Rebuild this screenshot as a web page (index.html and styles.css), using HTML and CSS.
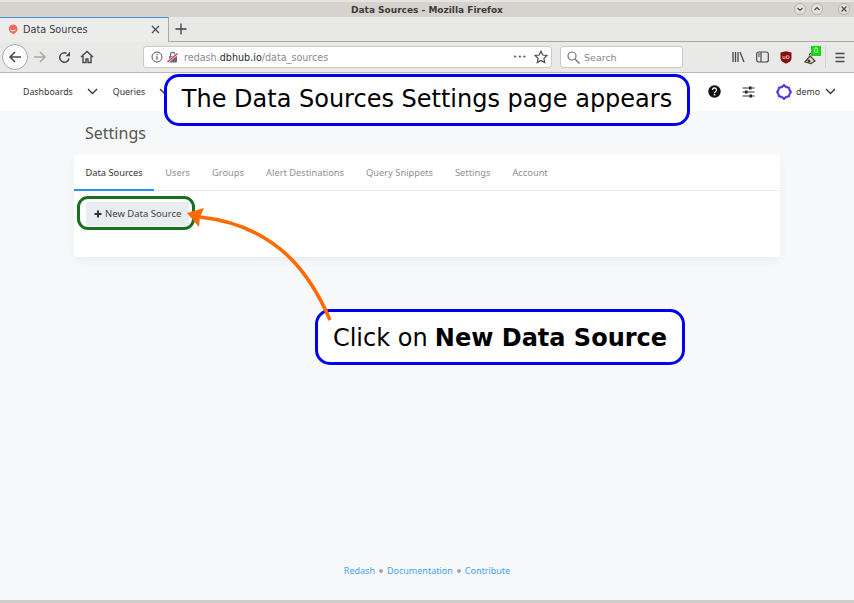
FILE: index.html
```html
<!DOCTYPE html>
<html lang="en">
<head>
    <meta charset="UTF-8">
    <title>Data Sources - Mozilla Firefox</title>
    <link rel="stylesheet" href="styles.css">
</head>
<body>
    <div class="window">
        <div class="titlebar">
            <span class="title-text">Data Sources - Mozilla Firefox</span>
            <div class="win-buttons">
                <span class="win-btn"><svg width="8" height="8" viewBox="0 0 8 8"><path d="M1.500 3l2.500 2.500L6.500 3" class="win-glyph"/></svg></span>
                <span class="win-btn"><svg width="8" height="8" viewBox="0 0 8 8"><path d="M1.500 5L4 2.500 6.500 5" class="win-glyph"/></svg></span>
                <span class="win-btn win-close"><svg width="8" height="8" viewBox="0 0 8 8"><path d="M1.500 1.500l5 5M6.500 1.500l-5 5" class="win-glyph"/></svg></span>
            </div>
        </div>

        <div class="tabstrip">
            <div class="tab">
                <svg class="favicon" width="10" height="11" viewBox="0 0 10 11"><path d="M5 0.500a4.500 4.500 0 0 1 2.200 8.400L5 10.500 4.600 9.400A4.500 4.500 0 0 1 5 0.500z" fill="#f0685f"/><path d="M2.500 6c1.500 1 3.500 1 5 0" fill="none" stroke="#fff" stroke-width="1"/></svg>
                <span class="tab-label">Data Sources</span>
                <svg class="tab-close" width="9" height="9" viewBox="0 0 9 9"><path d="M1 1l7 7M8 1l-7 7" stroke="#4a4a4f" stroke-width="1.200"/></svg>
            </div>
            <svg class="new-tab" width="12" height="12" viewBox="0 0 12 12"><path d="M6 0.500v11M0.500 6h11" stroke="#3c3c40" stroke-width="1.300"/></svg>
        </div>

        <div class="toolbar">
            <span class="back-btn">
                <svg width="14" height="14" viewBox="0 0 14 14"><path d="M13 7H2M7 2L2 7l5 5" fill="none" stroke="#47474c" stroke-width="1.500"/></svg>
            </span>
            <svg class="tool-icon forward" width="14" height="14" viewBox="0 0 14 14"><path d="M1 7h11M7 2l5 5-5 5" fill="none" stroke="#a9a9ab" stroke-width="1.500"/></svg>
            <svg class="tool-icon reload" width="13" height="13" viewBox="0 0 13 13"><path d="M11 7.500A4.700 4.700 0 1 1 8.500 2.300" fill="none" stroke="#47474c" stroke-width="1.500"/><path d="M12 0.800v4.400H7.600z" fill="#47474c"/></svg>
            <svg class="tool-icon home" width="14" height="14" viewBox="0 0 14 14"><path d="M1 7l6-5.500L13 7M3 6v6.500h3V9h2v3.500h3V6" fill="none" stroke="#47474c" stroke-width="1.400"/></svg>

            <div class="urlbar">
                <svg width="12" height="12" viewBox="0 0 12 12"><circle cx="6" cy="6" r="5" fill="none" stroke="#57575b" stroke-width="1"/><path d="M6 5.200v3.500M6 3v1.200" stroke="#57575b" stroke-width="1.200"/></svg>
                <svg class="lock" width="11" height="12" viewBox="0 0 11 12"><rect x="2" y="5" width="8" height="6.500" rx="1" fill="#6a6a6e"/><path d="M3.500 5V3.500a2.200 2.200 0 0 1 4.400 0V5" fill="none" stroke="#6a6a6e" stroke-width="1.200"/><path d="M0.500 11L10.500 2.500" stroke="#fff" stroke-width="2.600"/><path d="M0.500 11L10.500 2.500" stroke="#e8294c" stroke-width="1.400"/></svg>
                <span class="url"><span class="url-dim">redash.</span>dbhub.io<span class="url-dim">/data_sources</span></span>
                <span class="url-dots">•••</span>
                <svg width="14" height="14" viewBox="0 0 14 14"><path d="M7 1.200l1.800 3.800 4.100.500-3 2.900.8 4.100L7 10.500l-3.700 2 .8-4.100-3-2.900 4.100-.500z" fill="none" stroke="#47474c" stroke-width="1.200"/></svg>
            </div>

            <div class="searchbar">
                <svg width="13" height="13" viewBox="0 0 13 13"><circle cx="5" cy="5" r="4" fill="none" stroke="#77777a" stroke-width="1.200"/><path d="M8 8l4.500 4.500" stroke="#77777a" stroke-width="1.400"/></svg>
                <span class="search-text">Search</span>
            </div>

            <div class="tool-right">
                <svg width="13" height="12" viewBox="0 0 13 12"><path d="M1 1v10M3.500 1v10M6 1v10M8 1l4 10" fill="none" stroke="#47474c" stroke-width="1.300"/></svg>
                <svg width="13" height="12" viewBox="0 0 13 12"><rect x="0.700" y="1" width="11.600" height="10" rx="2" fill="none" stroke="#47474c" stroke-width="1.200"/><path d="M5 1v10" stroke="#47474c" stroke-width="1.200"/><path d="M2 3h2M2 5h2" stroke="#47474c"/></svg>
                <svg width="12" height="13" viewBox="0 0 12 13"><path d="M0.500 1.500L6 0.300l5.500 1.200v5.500c0 3-3 4.800-5.500 5.700C3.500 11.800.5 10 .5 7z" fill="#8a1010"/><path d="M3 5v2.500h2V5M6.500 4.800v2.700h1.500a1.300 1.300 0 0 0 0-2.700z" fill="none" stroke="#e9c3c3" stroke-width="0.800"/></svg>
                <span class="addon">
                    <svg width="15" height="13" viewBox="0 0 15 13"><path d="M1 10l5-6 5 5-4 2.500z" fill="#e9dcc0" stroke="#4a4038" stroke-width="1.200"/><circle cx="5" cy="9" r="1.500" fill="#3a3330"/><path d="M5 3l2-2" stroke="#4a4038" stroke-width="1.200"/></svg>
                    <span class="addon-badge">0</span>
                </span>
                <span class="tool-sep"></span>
                <svg width="10" height="11" viewBox="0 0 10 11"><path d="M0.500 1.500h9M0.500 5.500h9M0.500 9.500h9" stroke="#47474c" stroke-width="1.400"/></svg>
            </div>
        </div>

        <div class="page">
            <nav class="app-nav">
                <span class="nav-link">Dashboards</span>
                <svg class="chev chev-dash" width="11" height="7" viewBox="0 0 11 7"><path d="M1 1l4.500 4.500L10 1" fill="none" stroke="#333" stroke-width="1.300"/></svg>
                <span class="nav-link">Queries</span>
                <svg class="chev" width="11" height="7" viewBox="0 0 11 7"><path d="M1 1l4.500 4.500L10 1" fill="none" stroke="#333" stroke-width="1.300"/></svg>
                <div class="nav-right">
                    <svg width="13" height="13" viewBox="0 0 13 13"><circle cx="6.500" cy="6.500" r="6.200" fill="#111"/><path d="M4.500 5a2 2 0 1 1 3 1.700c-.7.400-1 .8-1 1.500" fill="none" stroke="#fff" stroke-width="1.300"/><rect x="5.800" y="9" width="1.500" height="1.500" fill="#fff"/></svg>
                    <svg class="sliders" width="13" height="12" viewBox="0 0 13 12"><path d="M0.500 2h12M0.500 6h12M0.500 10h12" stroke="#333" stroke-width="1.100"/><rect x="7" y="0.500" width="2.500" height="3" fill="#222"/><rect x="3" y="4.500" width="2.500" height="3" fill="#222"/><rect x="7.500" y="8.500" width="2.500" height="3" fill="#222"/></svg>
                    <svg class="avatar" width="16" height="16" viewBox="0 0 16 16"><path d="M8 1.200c1.500 1.800 2.300 2.400 5 2.600.3 2.200.500 2.800 1.800 4.200-1.300 1.400-1.500 2-1.800 4.200-2.700.2-3.500.8-5 2.600-1.500-1.800-2.300-2.400-5-2.600C2.700 10 2.500 9.400 1.200 8 2.500 6.600 2.700 6 3 3.800c2.700-.2 3.500-.8 5-2.600z" fill="none" stroke="#5a35e0" stroke-width="2.200"/></svg>
                    <span class="nav-link demo">demo</span>
                    <svg class="chev" width="11" height="7" viewBox="0 0 11 7"><path d="M1 1l4.500 4.500L10 1" fill="none" stroke="#333" stroke-width="1.300"/></svg>
                </div>
            </nav>

            <main class="content">
                <h1 class="page-title">Settings</h1>
                <section class="card">
                    <div class="tabs">
                        <span class="settings-tab active">Data Sources</span>
                        <span class="settings-tab">Users</span>
                        <span class="settings-tab">Groups</span>
                        <span class="settings-tab">Alert Destinations</span>
                        <span class="settings-tab">Query Snippets</span>
                        <span class="settings-tab">Settings</span>
                        <span class="settings-tab">Account</span>
                    </div>
                    <div class="card-body">
                        <button class="new-btn"><svg width="8" height="8" viewBox="0 0 8 8"><path d="M4 0.500v7M0.500 4h7" stroke="#333" stroke-width="2"/></svg>New Data Source</button>
                    </div>
                </section>
            </main>

            <footer class="app-footer">
                <a>Redash</a><span class="dot"></span><a>Documentation</a><span class="dot"></span><a>Contribute</a>
            </footer>

            <div class="callout callout-top">The Data Sources Settings page appears</div>
            <div class="callout callout-click">Click on <b>New Data Source</b></div>
            <div class="btn-ring"></div>
            <svg class="arrow" width="854" height="603" viewBox="0 0 854 603">
                <path d="M330 320C312 278 280 226 200 217" fill="none" stroke="#ff6a00" stroke-width="3.500"/>
                <path d="M187 213L204 208 200 217 199 227z" fill="#ff6a00"/>
            </svg>
        </div>

        <div class="bottom-edge"></div>
    </div>
</body>
</html>
```

FILE: styles.css
```css
* {
    box-sizing: border-box;
}

html, body {
    margin: 0;
    padding: 0;
}

body {
    width: 854px;
    height: 603px;
    overflow: hidden;
    font-family: "DejaVu Sans", sans-serif;
}

.window {
    position: relative;
    display: flex;
    flex-direction: column;
    height: 603px;
}

.titlebar {
    position: relative;
    height: 17px;
    flex: none;
    background-color: #d6d2ce;
    border-top: 2px solid #e6e3e0;
    display: flex;
    align-items: center;
    justify-content: center;
}

.title-text {
    font-size: 9px;
    font-weight: bold;
    color: #3b3b3b;
}

.win-buttons {
    position: absolute;
    right: 0;
    top: 1px;
    display: flex;
}

.win-btn {
    width: 12px;
    height: 12px;
    border-radius: 50%;
    background-color: #e4e1de;
    border: 1px solid #b5b1ad;
    display: flex;
    align-items: center;
    justify-content: center;
    margin-right: 5px;
}

.win-close {
    margin-left: 10px;
    margin-right: 4px;
}

.win-glyph {
    fill: none;
    stroke: #4a4a4a;
    stroke-width: 1.200;
}

.tabstrip {
    height: 25px;
    flex: none;
    background-color: #e8e8e7;
    border-bottom: 1px solid #a8a8a8;
    display: flex;
    align-items: center;
}

.tab {
    width: 169px;
    height: 25px;
    background-color: #ececeb;
    border-top: 1px solid #4a90d9;
    border-right: 1px solid #a8a8a8;
    display: flex;
    align-items: center;
    padding: 0 8px;
}

.favicon {
    flex: none;
}

.tab-label {
    margin-left: 5px;
    font-size: 9.700px;
    color: #39393c;
    flex: 1;
}

.tab-close {
    margin-right: 0;
}

.new-tab {
    margin-left: 6px;
}

.toolbar {
    height: 31px;
    flex: none;
    background-color: #e9e9e8;
    border-bottom: 1px solid #b9b9b9;
    display: flex;
    align-items: center;
    padding-left: 2px;
}

.back-btn {
    width: 26px;
    height: 26px;
    border-radius: 50%;
    background-color: #fbfbfb;
    border: 1px solid #a9a9a9;
    display: flex;
    align-items: center;
    justify-content: center;
    flex: none;
}

.tool-icon {
    flex: none;
}

.forward {
    margin-left: 5px;
}

.reload {
    margin-left: 11px;
}

.home {
    margin-left: 9px;
}

.urlbar {
    width: 409px;
    height: 22px;
    margin-left: 49px;
    flex: none;
    background-color: #fff;
    border: 1px solid #c9c9c9;
    border-radius: 3px;
    display: flex;
    align-items: center;
    padding: 0 3px 0 7px;
}

.lock {
    margin-left: 4px;
}

.url {
    margin-left: 6px;
    font-size: 9.600px;
    color: #2b2b2e;
    flex: 1;
}

.url-dim {
    color: #8a8a8d;
}

.url-dots {
    font-size: 7px;
    letter-spacing: 0.500px;
    color: #555;
    margin-right: 7px;
}

.searchbar {
    width: 123px;
    height: 22px;
    margin-left: 8px;
    flex: none;
    background-color: #fff;
    border: 1px solid #c9c9c9;
    border-radius: 3px;
    display: flex;
    align-items: center;
    padding: 0 6px;
}

.search-text {
    margin-left: 4px;
    font-size: 9.500px;
    color: #85858a;
}

.tool-right {
    display: flex;
    align-items: center;
    margin-left: 49px;
}

.tool-right > svg {
    margin-right: 11px;
}

.addon {
    position: relative;
    width: 16px;
    height: 14px;
    margin-left: 1px;
}

.addon-badge {
    position: absolute;
    left: 7px;
    top: -4px;
    width: 10px;
    height: 10px;
    background-color: #12d812;
    color: #fff;
    font-size: 7.500px;
    line-height: 10px;
    text-align: center;
}

.tool-sep {
    width: 1px;
    height: 22px;
    background-color: #d4d4d4;
    margin-left: 5px;
    margin-right: 9px;
}

.page {
    flex: 1;
    background-color: #f6f8f9;
    display: flex;
    flex-direction: column;
    font-family: "Noto Sans", sans-serif;
}

.app-nav {
    height: 38px;
    flex: none;
    background-color: #fff;
    display: flex;
    align-items: center;
    padding: 0 0 1px 23px;
}

.nav-link {
    font-size: 8.800px;
    color: #333;
}

.chev {
    margin-left: 14px;
    margin-right: 15px;
}

.nav-right {
    margin-left: auto;
    display: flex;
    align-items: center;
}

.sliders {
    margin-left: 21px;
}

.avatar {
    margin-left: 21px;
}

.demo {
    margin-left: 4px;
}

.nav-right .chev {
    margin-left: 5px;
    margin-right: 18px;
}

.content {
    padding: 0 74px;
    flex: 1;
}

.page-title {
    margin: 11px 0 10px 11px;
    font-size: 16px;
    line-height: 22px;
    font-weight: normal;
    color: #555;
}

.card {
    height: 103px;
    background-color: #fff;
    border-radius: 3px;
    box-shadow: 0 4px 9px -3px rgba(102, 136, 153, 0.15);
}

.tabs {
    height: 37px;
    display: flex;
    border-bottom: 1px solid #eaeaea;
}

.settings-tab {
    padding: 0 11px;
    font-size: 9.300px;
    line-height: 37px;
    color: #8f8f8f;
    white-space: nowrap;
}

.settings-tab.active {
    color: #333;
    height: 37px;
    padding: 0 11.500px;
    border-bottom: 2px solid #2196f3;
}

.card-body {
    padding: 11px 12px;
}

.new-btn {
    height: 24px;
    width: 103px;
    padding: 0 0 1px 8px;
    border: none;
    border-radius: 2px;
    background-color: #e9edf0;
    color: #444;
    font-family: "Noto Sans", sans-serif;
    font-size: 9.500px;
    display: flex;
    align-items: center;
}

.new-btn svg {
    margin-right: 3px;
}

.app-footer {
    height: 60px;
    flex: none;
    display: flex;
    justify-content: center;
    padding: 24px 0 0;
    font-size: 9px;
    line-height: 13px;
}

.app-footer a {
    color: #46a3ee;
}

.dot {
    width: 4px;
    height: 4px;
    margin: 5px 4px 0;
    border-radius: 50%;
    background-color: #a5a5a5;
}

/* annotation layer */
.callout {
    position: absolute;
    background-color: #fff;
    border: 3px solid #0000f0;
    border-radius: 15px;
    color: #000;
    font-family: "DejaVu Sans", sans-serif;
    font-size: 24px;
    white-space: nowrap;
    display: flex;
    align-items: center;
    justify-content: center;
    gap: 0.300em;
}

.callout-top {
    left: 164px;
    top: 74px;
    width: 526px;
    height: 52px;
    padding-bottom: 2px;
}

.callout-click {
    left: 315px;
    top: 309px;
    width: 370px;
    height: 56px;
    padding-top: 2px;
}

.btn-ring {
    position: absolute;
    left: 77px;
    top: 196px;
    width: 118px;
    height: 34px;
    border: 3px solid #16701c;
    border-radius: 11px;
}

.arrow {
    position: absolute;
    left: 0;
    top: 0;
    pointer-events: none;
}

.bottom-edge {
    height: 3px;
    flex: none;
    background-color: #cfcdca;
}
```
